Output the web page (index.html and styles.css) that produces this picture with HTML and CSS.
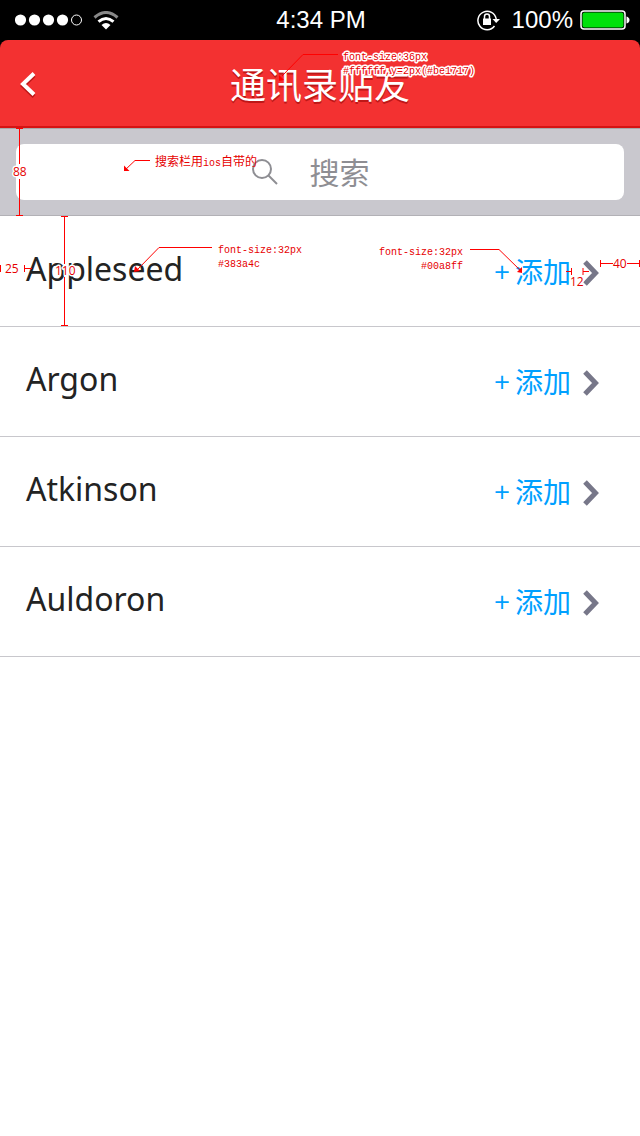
FILE: index.html
```html
<!DOCTYPE html>
<html lang="zh-CN">
<head>
<meta charset="utf-8">
<meta name="viewport" content="width=device-width, initial-scale=1">
<title>通讯录贴友</title>
<link rel="stylesheet" href="styles.css">
</head>
<body>
<div class="status-bar">
  <div class="status-left">
    <svg width="68" height="12" viewBox="0 0 68 12" fill="#fff"><circle cx="5.5" cy="6" r="5.6"/><circle cx="19.5" cy="6" r="5.6"/><circle cx="33.5" cy="6" r="5.6"/><circle cx="47.5" cy="6" r="5.6"/><circle cx="61.5" cy="6" r="5" fill="none" stroke="#fff"/></svg>
    <svg width="26" height="19" viewBox="0 0 26 19" fill="none" stroke-width="3"><path d="M1.5 6.5Q13-3.5 24.500 6.500" stroke="#888"/><path d="M5.500 10.700Q13 4.300 20.500 10.700" stroke="#fff"/><path d="M8.500 14Q13 10 17.500 14L13 18.500Z" fill="#fff"/></svg>
  </div>
  <time class="clock">4:34 PM</time>
  <div class="status-right">
    <svg width="24" height="22" viewBox="0 0 24 22" fill="none" stroke="#fff" stroke-width="1.500"><path d="M17.500 17A9.200 9.200 0 1 1 19.200 10"/><path d="M15.500 10H23L19.200 14Z" fill="#fff" stroke="none"/><path d="M6 9.500h8V16H6Z" fill="#fff" stroke="none"/><path d="M7.500 10V7.500a2.500 2.500 0 0 1 5 0V10"/></svg>
    <span class="charge">100%</span>
    <svg width="50" height="20" viewBox="0 0 50 20"><rect x="1" y="1" width="44" height="18" rx="3" fill="none" stroke="#fff" stroke-width="1.500"/><rect x="2.500" y="2.500" width="41" height="15" rx="2" fill="#00e10b"/><path d="M46.500 6.500q3 1 3 3.500t-3 3.500Z" fill="#fff"/></svg>
  </div>
</div>
<div class="header-wrap">
  <header class="header">
    <button class="back" type="button" aria-label="返回"><svg width="18" height="28" viewBox="0 0 18 28" fill="none" stroke-width="4"><path d="M15 4.500 4 15l11 10.500" stroke="#be1717"/><path d="M15 2.500 4 13l11 10.500" stroke="#fff"/></svg></button>
    <h1 class="title">通讯录贴友</h1>
    <svg class="note note-title" width="200" height="48" viewBox="0 0 200 48"><path class="line" d="M58 14.500H23L2 36"/><path class="tip" d="M-1 41v-6l5 5Z"/><text class="code halo" x="63" y="20">font-size:36px</text><text class="code halo" x="63" y="34">#ffffff,y=2px(#be1717)</text></svg>
  </header>
</div>
<main>
  <form class="search" role="search">
    <input class="search-input" type="search" placeholder="搜索" aria-label="搜索">
    <svg class="search-icon" width="26" height="26" viewBox="0 0 26 26" fill="none" stroke="#8e8e93" stroke-width="2"><circle cx="10" cy="10" r="9"/><path d="m16 16 9 9"/></svg>
    <svg class="note note-search" width="30" height="88" viewBox="0 0 30 88"><path class="line" d="M8.500.5V36M8.500 51v36.500M5 .5h7M5 87.500h7"/><text class="size halo" x="2" y="48">88</text></svg>
    <svg class="note note-ios" width="150" height="24" viewBox="0 0 150 24"><path class="line" d="M30 8.500H15L4 19"/><path class="tip" d="M4 13.500V19h5.500Z"/><text class="han" x="35" y="14">搜索栏用<tspan class="code">ios</tspan>自带的</text></svg>
  </form>
  <ul class="contacts">
    <li class="contact">
      <span class="name">Appleseed</span>
      <button class="add" type="button"><span class="plus">+</span>添加</button>
      <svg class="chevron" width="16" height="26" viewBox="0 0 16 26"><path d="m2 2 10.500 11L2 24"/></svg>
      <svg class="note note-name" width="310" height="110" viewBox="0 0 310 110"><path class="line" d="M.5 49v7M24.500 49v7M25 52.500h7M64.500.5V48M64.500 61v48.500M61 .5h7M61 109.500h7M212 31.500h-53L137 54"/><path class="tip" d="m135 50 5 5-6 1Z"/><text class="size" x="5" y="57">25</text><text class="size halo" x="55" y="59">110</text><text class="code" x="218" y="37">font-size:32px</text><text class="code" x="218" y="51">#383a4c</text></svg>
      <svg class="note note-add" width="270" height="110" viewBox="0 0 270 110"><path class="line" d="M100 33.500h29L151 55M196 55.500h5.500M201.500 52v7M213 52v7M213 55.500h6M230.500 44v7M231 47.500h12M257 47.500h12M269.500 44v7"/><path class="tip" d="M152 51v6l-5-1Z"/><text class="code" x="9" y="39">font-size:32px</text><text class="code" x="51" y="53">#00a8ff</text><text class="size halo" x="200" y="70">12</text><text class="size" x="243" y="52">40</text></svg>
    </li>
    <li class="contact"><span class="name">Argon</span><button class="add" type="button"><span class="plus">+</span>添加</button><svg class="chevron" width="16" height="26" viewBox="0 0 16 26"><path d="m2 2 10.500 11L2 24"/></svg></li>
    <li class="contact"><span class="name">Atkinson</span><button class="add" type="button"><span class="plus">+</span>添加</button><svg class="chevron" width="16" height="26" viewBox="0 0 16 26"><path d="m2 2 10.500 11L2 24"/></svg></li>
    <li class="contact"><span class="name">Auldoron</span><button class="add" type="button"><span class="plus">+</span>添加</button><svg class="chevron" width="16" height="26" viewBox="0 0 16 26"><path d="m2 2 10.500 11L2 24"/></svg></li>
  </ul>
</main>
</body>
</html>
```
FILE: styles.css
```css
* { box-sizing: border-box; }
body { margin: 0; background: #fff; font-family: "Open Sans", "Noto Sans CJK SC", sans-serif; }
button { border: 0; padding: 0; background: none; font: inherit; cursor: pointer; }
svg { display: block; flex: none; }

.status-bar { display: grid; grid-template-columns: 1fr auto 1fr; align-items: center; height: 40px; padding: 0 10px 0 15px; background: #000; color: #fff; font-family: "Liberation Sans", Arial, sans-serif; font-size: 24px; line-height: 40px; }
.status-left, .status-right { display: flex; align-items: center; gap: 10px; }
.status-right { justify-content: flex-end; gap: 8px; }
.charge { padding-left: 3px; margin-right: -1px; }
.clock { padding-right: 3px; }

.header-wrap { background: #000; }
.header { position: relative; display: grid; grid-template-columns: 64px 1fr 64px; align-items: center; height: 88px; background: #f33131; border-bottom: 2px solid #d51313; border-radius: 8px 8px 0 0; }
.back { display: flex; align-items: center; height: 86px; padding: 4px 0 0 19px; }
.title { margin: 0; color: #fff; font-family: "Noto Sans CJK SC", sans-serif; font-size: 36px; font-weight: 400; line-height: 48px; text-align: center; text-shadow: 0 2px 0 #be1717; }

.search { position: relative; height: 88px; padding: 15px 16px; background: #c9c8ce; border-top: 1px solid #a9a7a9; border-bottom: 1px solid #b2b1b6; }
.search-input { display: block; width: 100%; height: 56px; margin: 0; padding: 0 0 2px 64px; border: 0; border-radius: 8px; background: #fff; color: #232323; font-family: "Noto Sans CJK SC", sans-serif; font-size: 30px; text-align: center; appearance: none; outline-color: #00a8ff; }
.search-input::placeholder { color: #8e8e93; opacity: 1; }
.search-icon { position: absolute; top: 30px; left: calc(50% - 68px); pointer-events: none; }

.contacts { margin: 0; padding: 1px 0 0; list-style: none; }
.contact { position: relative; display: flex; align-items: center; height: 110px; padding: 0 41px 0 26px; border-bottom: 1px solid #c8c7cc; }
.name { flex: 1; padding-bottom: 6px; color: #232323; font-family: "Noto Sans", sans-serif; font-size: 32px; line-height: 44px; }
.add { display: flex; align-items: center; gap: 5px; margin-right: 12px; padding-bottom: 2px; color: #00a0ff; font-family: "Noto Sans CJK SC", sans-serif; font-size: 28px; font-weight: 400; line-height: 40px; }
.plus { font-family: "Open Sans", sans-serif; }
.chevron { margin-top: 2px; fill: none; stroke: #777789; stroke-width: 5; }

.note { position: absolute; top: 0; overflow: visible; pointer-events: none; }
.note-title { left: calc(50% - 40px); }
.note-search { top: -1px; left: 11px; }
.note-ios { top: 23px; left: 120px; }
.note-name { top: -1px; left: 0; }
.note-add { top: -1px; right: 0; }
.line { fill: none; stroke: #f00; stroke-width: 1; }
.tip { fill: #f00; }
.note text { fill: #e60000; font-size: 12px; }
.note .code { font-family: "Liberation Mono", monospace; font-size: 10px; }
.note .han { font-family: "Noto Sans CJK SC", sans-serif; }
.note .size { font-family: "Open Sans", sans-serif; }
.note .halo { stroke: #fff; stroke-width: 3px; stroke-linejoin: round; paint-order: stroke; }
```
